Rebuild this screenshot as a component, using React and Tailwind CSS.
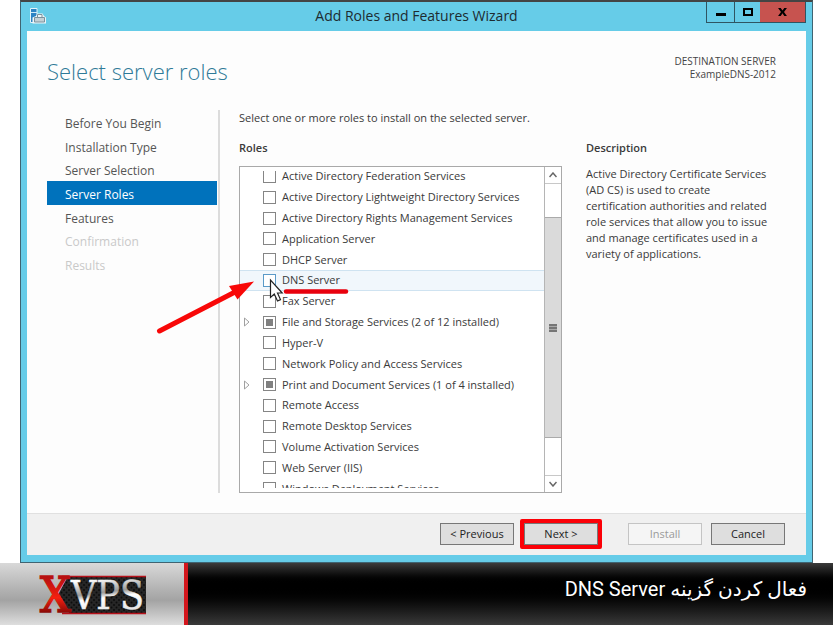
import React, { useEffect, useRef, useState } from 'react';

const steps = [
  { name: 'Before You Begin' },
  { name: 'Installation Type' },
  { name: 'Server Selection' },
  { name: 'Server Roles', active: true },
  { name: 'Features' },
  { name: 'Confirmation', disabled: true },
  { name: 'Results', disabled: true },
];

const roles = [
  { name: 'Active Directory Federation Services' },
  { name: 'Active Directory Lightweight Directory Services' },
  { name: 'Active Directory Rights Management Services' },
  { name: 'Application Server' },
  { name: 'DHCP Server' },
  { name: 'DNS Server', hovered: true },
  { name: 'Fax Server' },
  { name: 'File and Storage Services (2 of 12 installed)', partial: true },
  { name: 'Hyper-V' },
  { name: 'Network Policy and Access Services' },
  { name: 'Print and Document Services (1 of 4 installed)', partial: true },
  { name: 'Remote Access' },
  { name: 'Remote Desktop Services' },
  { name: 'Volume Activation Services' },
  { name: 'Web Server (IIS)' },
  { name: 'Windows Deployment Services' },
];

const TitleBar = () => (
  <header className="relative flex h-[29px] items-start justify-between pl-[3px]">
    <svg className="mt-1.5" width="16" height="16" viewBox="0 0 16 16">
      <path d="M0.500 0.500h6.500v14H0.500z" fill="#2b83c4" stroke="#e4f5fb" strokeWidth="1" />
      <path d="M1 4.500h6" stroke="#cfeaf7" strokeWidth="1" />
      <path d="M2.500 15.500V9.500L6 8l1.500-2.500h5L14 8l2 1.500v6z" fill="#eef5f8" />
      <path d="M4.500 9.500h10v4.500h-10z" fill="#c3d0d6" stroke="#7b929d" />
      <path d="M7.500 9V6.500h4.500V9" fill="none" stroke="#7b929d" />
    </svg>
    <h1 className="absolute inset-x-0 top-1 text-center text-[14px] leading-5 text-[#1d2b30]">
      Add Roles and Features Wizard
    </h1>
    <div className="relative flex h-[21px] border border-t-0 border-[#2f5562]">
      <button aria-label="Minimize" className="flex w-[27px] items-center justify-center">
        <svg width="10" height="10" viewBox="0 0 10 10"><path d="M0 6h10v3H0z" /></svg>
      </button>
      <button aria-label="Maximize" className="flex w-[26px] items-center justify-center border-l border-[#2f5562]">
        <svg width="10" height="8" viewBox="0 0 10 8"><path d="M1 1h8v6H1z" fill="none" stroke="#000" strokeWidth="2" /></svg>
      </button>
      <button aria-label="Close" className="flex w-[45px] items-center justify-center bg-[#c7534f]">
        <svg width="9" height="8" viewBox="0 0 10 9">
          <path d="M0 0h3l2 2.700L7 0h3L6.700 4.400 10 9H7L5 6 3 9H0l3.300-4.600z" />
        </svg>
      </button>
    </div>
  </header>
);

const StepList = () => (
  <nav className="w-[173px] shrink-0 border-r-2 border-[#dcdcdc] pr-px">
    <ul className="grid h-[166px] grid-rows-7">
      {steps.map((step) => (
        <li key={step.name} className={step.active ? 'bg-[#0072bc]' : ''}>
          <a
            href="#"
            aria-disabled={step.disabled}
            className={`flex h-full items-center pt-1 pl-[18px] text-[12px] leading-4 ${
              step.active ? 'text-white' : step.disabled ? 'text-[#c9c9c9]' : 'text-[#555]'
            }`}
          >
            {step.name}
          </a>
        </li>
      ))}
    </ul>
  </nav>
);

const RoleRow = ({ role }) => {
  const [checked, setChecked] = useState(false);
  const boxRef = useRef(null);

  useEffect(() => {
    boxRef.current.indeterminate = Boolean(role.partial);
  }, [role.partial]);

  return (
    <li
      className={`flex min-h-0 flex-1 items-center border-y pl-1 ${
        role.hovered ? 'border-[#cfe3f1] bg-[#f1f7fc]' : 'border-transparent'
      }`}
    >
      <span className="w-[19px] shrink-0">
        {role.partial && (
          <svg width="6" height="10" viewBox="0 0 6 10">
            <path d="M0.500 1L5 5 0.500 9z" fill="#fff" stroke="#a0a0a0" />
          </svg>
        )}
      </span>
      <label className="flex items-center gap-1.5 text-[11px] leading-4 whitespace-nowrap text-[#3a3a3a]">
        <input
          ref={boxRef}
          type="checkbox"
          checked={checked}
          onChange={(e) => setChecked(e.target.checked)}
          className={`size-[13px] shrink-0 appearance-none border bg-white p-0.5 checked:bg-[#707070] checked:bg-clip-content indeterminate:bg-[#808080] indeterminate:bg-clip-content ${
            role.hovered ? 'border-[#5a9ac8]' : 'border-[#858585]'
          }`}
        />
        {role.name}
      </label>
    </li>
  );
};

const ScrollBar = () => (
  <div className="flex w-[17px] shrink-0 flex-col border-l border-[#b5b5b5] bg-white">
    <button aria-label="Scroll up" className="flex h-[17px] items-center justify-center border-b border-[#c8c8c8]">
      <svg width="8" height="6" viewBox="0 0 8 6"><path d="M0.500 5L4 1l3.500 4" fill="none" stroke="#666" strokeWidth="1.500" /></svg>
    </button>
    <div className="flex-1 pt-[33px] pb-[37px]">
      <div className="flex h-full items-center justify-center border-y border-[#aaa] bg-[#dadada]">
        <svg width="8" height="8" viewBox="0 0 8 8">
          <path d="M0 0h8v8H0z" fill="#aaa" />
          <path d="M0 1h8M0 4h8M0 7h8" stroke="#666" strokeWidth="1.500" />
        </svg>
      </div>
    </div>
    <button aria-label="Scroll down" className="flex h-[17px] items-center justify-center border-t border-[#c8c8c8]">
      <svg width="8" height="6" viewBox="0 0 8 6"><path d="M0.500 1L4 5l3.500-4" fill="none" stroke="#666" strokeWidth="1.500" /></svg>
    </button>
  </div>
);

// Red arrow, underline and mouse pointer drawn over the role list
const Annotations = () => (
  <svg
    className="pointer-events-none absolute top-[103px] left-[-90px]"
    width="210"
    height="70"
    viewBox="150 270 210 70"
  >
    <path d="M159.500 331L236 291.500" stroke="#f80808" strokeWidth="5" strokeLinecap="round" />
    <path d="M254 281.500L229 286l8.500 13.500z" fill="#f80808" />
    <path d="M286 291.500h60" stroke="#e8000d" strokeWidth="4.500" strokeLinecap="round" />
    <path
      d="M270.500 280v17.500l3.800-3.500 3.200 7 3-1.400-3-6.600h4.700z"
      fill="#fff"
      stroke="#222"
      strokeWidth="1.200"
    />
  </svg>
);

const RolePicker = () => (
  <section className="min-w-0 flex-1">
    <p className="text-[11px] leading-4 whitespace-nowrap text-[#3a3a3a]">
      Select one or more roles to install on the selected server.
    </p>
    <h3 className="mt-3.5 text-[11px] leading-4 font-semibold text-[#3a3a3a]">Roles</h3>
    <div className="relative mt-2.5 border border-[#a9a9a9] bg-white">
      <div className="flex h-[325px]">
        <div className="my-1 min-w-0 flex-1 overflow-hidden">
          <ul className="-mt-[5px] flex h-[333px] flex-col">
            {roles.map((role) => (
              <RoleRow key={role.name} role={role} />
            ))}
          </ul>
        </div>
        <ScrollBar />
      </div>
      <Annotations />
    </div>
  </section>
);

const Description = () => (
  <section className="w-[190px] shrink-0 pt-[30px] pr-1 text-[11px] leading-4 text-[#3a3a3a]">
    <h3 className="font-semibold">Description</h3>
    <p className="mt-2.5">
      Active Directory Certificate Services (AD CS) is used to create certification authorities and
      related role services that allow you to issue and manage certificates used in a variety of
      applications.
    </p>
  </section>
);

const WizardButton = ({ children, className = '', ...props }) => (
  <button
    className={`h-[22px] w-[74px] border text-[11px] leading-4 ${
      props.disabled
        ? 'border-[#c4c4c4] bg-[#f5f5f5] text-[#9a9a9a]'
        : 'border-[#777] bg-[#dedede] text-[#222]'
    } ${className}`}
    {...props}
  >
    {children}
  </button>
);

const Footer = () => (
  <footer className="flex h-[42px] items-center justify-end border-t border-[#e0e0e0] bg-[#f0f0f0] pr-[21px] pb-0.5">
    <WizardButton>&lt; Previous</WizardButton>
    <div className="mr-[26px] ml-1.5 rounded-xs border-4 border-[#fb0007]">
      <WizardButton className="block border-[#8ab4e8]">Next &gt;</WizardButton>
    </div>
    <WizardButton disabled>Install</WizardButton>
    <WizardButton className="ml-[9px]">Cancel</WizardButton>
  </footer>
);

const Logo = () => (
  <svg className="overflow-visible" width="110" height="42" viewBox="37 572 110 42" role="img" aria-label="XVPS">
    <defs>
      <linearGradient id="red" x1="0" y1="0" x2="0" y2="1">
        <stop offset="0.200" stopColor="#b81010" />
        <stop offset="0.550" stopColor="#f5200f" />
        <stop offset="0.850" stopColor="#7a0606" />
      </linearGradient>
      <linearGradient id="silver" x1="0" y1="0" x2="0.200" y2="1">
        <stop offset="0.200" stopColor="#fff" />
        <stop offset="0.500" stopColor="#9a9a9a" />
        <stop offset="0.620" stopColor="#fff" />
        <stop offset="1" stopColor="#e0e0e0" />
      </linearGradient>
      <pattern id="mesh" width="5" height="5" patternUnits="userSpaceOnUse">
        <path d="M0 0h5v5H0z" fill="#262626" />
        <circle cx="1.500" cy="1.500" r="1" fill="#0c0c0c" />
        <circle cx="4" cy="4" r="1" fill="#0c0c0c" />
      </pattern>
    </defs>
    <path d="M68 575h78v38H70L58 594z" fill="url(#mesh)" />
    <path d="M62 575.500h84M62 612.500h84" stroke="#b5121b" strokeWidth="1.500" />
    <text x="40" y="611" fontSize="48" fill="url(#red)" stroke="url(#red)" strokeWidth="1.500" className="font-['DejaVu_Serif_Condensed','DejaVu_Serif',serif]">X</text>
    <text x="71" y="608" fontSize="39" fill="url(#silver)" stroke="url(#silver)" strokeWidth="0.500" className="font-['DejaVu_Serif_Condensed','DejaVu_Serif',serif]">VPS</text>
  </svg>
);

const Banner = () => (
  <div className="flex h-[62px]">
    <div className="flex w-[188px] shrink-0 items-center border-r-4 border-[#d3161c] bg-linear-to-b from-[#d9d9d9] via-[#a3a3a3] via-60% to-[#dedede] pl-[37px]">
      <Logo />
    </div>
    <p
      dir="rtl"
      lang="fa"
      className="flex-1 bg-linear-to-b from-[#3c3c3c] from-0% via-black via-35% to-[#3a3a3a] pt-3 pr-[26px] font-[Roboto,'DejaVu_Sans',sans-serif] text-[20px] leading-7 text-white"
    >
      فعال کردن گزینه DNS Server
    </p>
  </div>
);

const App = () => {
  return (
    <main className="bg-white font-['Open_Sans',sans-serif]">
      <div className="mx-5 border border-t-2 border-[#3f6472] border-t-[#444] bg-[#66cce8] pr-1.5 pb-[7px] pl-1.5">
        <TitleBar />
        <div className="bg-[#fdfdfd]">
          <div className="flex items-start justify-between px-5 pt-6 pr-[30px]">
            <h2 className="text-[22px] leading-8 font-light text-[#2f7a98]">
              Select server roles
            </h2>
            <p className="text-right text-[10px] leading-[13px] text-[#444]">
              DESTINATION SERVER
              <br />
              ExampleDNS-2012
            </p>
          </div>
          <div className="flex pt-[23px] pr-[30px] pb-5 pl-5">
            <StepList />
            <div className="flex min-w-0 flex-1 gap-6 pl-[19px]">
              <RolePicker />
              <Description />
            </div>
          </div>
          <Footer />
        </div>
      </div>
      <Banner />
    </main>
  );
};

export default App;
